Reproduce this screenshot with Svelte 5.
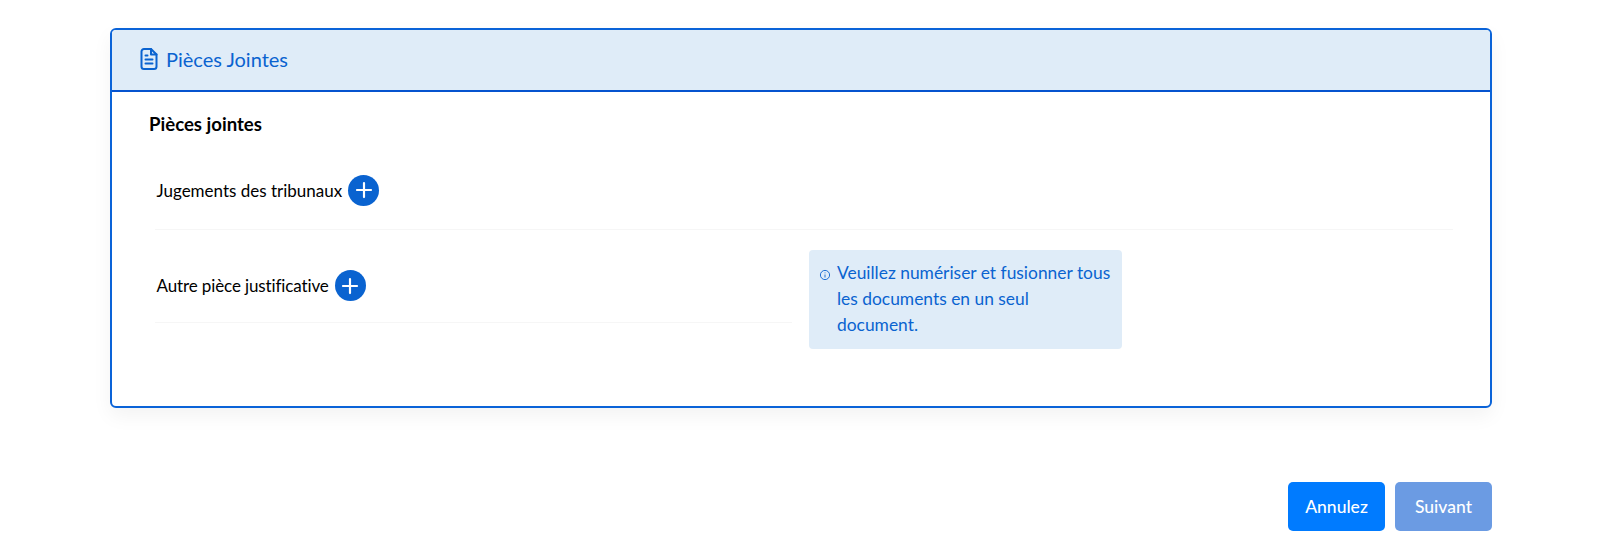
<script>
  const plus = "M12 5.500v13M5.500 12h13";
</script>

<main class="page">
  <section class="card">
    <header class="head">
      <svg class="doc" viewBox="0 0 24 24" width="24" height="24" fill="none" stroke="currentColor" stroke-width="2" stroke-linecap="round" stroke-linejoin="round">
        <path d="M14 2H7a2.500 2.500 0 0 0-2.500 2.500v15A2.500 2.500 0 0 0 7 22h10a2.500 2.500 0 0 0 2.500-2.500V7.500z" />
        <path d="M14 2v5.500h5.500M8.500 12.500h7M8.500 16.500h7M8.500 8.500h2" />
      </svg>
      <span>Pièces Jointes</span>
    </header>
    <div class="body">
      <h2>Pièces jointes</h2>
      <div class="row first">
        <span class="label">Jugements des tribunaux</span>
        <button class="add" aria-label="Ajouter">
          <svg viewBox="0 0 24 24" width="26" height="26" fill="none" stroke="#fff" stroke-width="2" stroke-linecap="round"><path d={plus} /></svg>
        </button>
      </div>
      <div class="second">
        <div class="row half">
          <span class="label tight">Autre pièce justificative</span>
          <button class="add" aria-label="Ajouter">
            <svg viewBox="0 0 24 24" width="26" height="26" fill="none" stroke="#fff" stroke-width="2" stroke-linecap="round"><path d={plus} /></svg>
          </button>
        </div>
        <aside class="note">
          <svg class="info" viewBox="0 0 12 12" width="12" height="12" fill="none" stroke="currentColor" stroke-width="0.9"><circle cx="6" cy="6" r="4.600" /><path d="M6 5.500v3M6 3.500v.8" /></svg>
          <p>Veuillez numériser et fusionner tous les documents en un seul document.</p>
        </aside>
      </div>
    </div>
  </section>
  <footer class="actions">
    <button class="btn primary">Annulez</button>
    <button class="btn muted">Suivant</button>
  </footer>
</main>

<style>
  :global(body) { margin: 0; background: #fff; }
  .page {
    width: 1382px;
    margin-left: 110px;
    padding-top: 28px;
    font-family: "Lato", "Open Sans", sans-serif;
    color: #000;
  }
  .card {
    height: 380px;
    box-sizing: border-box;
    border: 2px solid #0a63d8;
    border-radius: 6px;
    background: #fff;
    box-shadow: 0 8px 20px rgba(0, 0, 0, 0.05);
    overflow: hidden;
  }
  .head {
    height: 62px;
    box-sizing: border-box;
    display: flex;
    align-items: center;
    gap: 5px;
    padding: 0 0 2px 25px;
    background: #dfecf8;
    border-bottom: 2px solid #0553cf;
    color: #0a63d0;
    font-size: 20px;
  }
  .body { padding: 20px 37px 0 37px; }
  h2 { margin: 0; font-size: 18.600px; font-weight: 700; line-height: 24px; }
  .row {
    display: flex;
    align-items: center;
    gap: 6px;
    margin-left: 6px;
    padding-left: 1.500px;
    border-bottom: 1px solid #f6f6f6;
    font-size: 17px;
  }
  .tight { letter-spacing: -0.12px; }
  .first { height: 94px; box-sizing: border-box; padding-top: 15px; }
  .second { display: flex; gap: 17px; margin-top: 21px; align-items: flex-start; }
  .half { width: 637px; height: 72px; box-sizing: border-box; padding-bottom: 2px; flex: none; }
  .add {
    width: 31px;
    height: 31px;
    padding: 0;
    border: 0;
    border-radius: 50%;
    background: #0a63d0;
    display: flex;
    align-items: center;
    justify-content: center;
  }
  .note {
    width: 313px;
    height: 99px;
    box-sizing: border-box;
    display: flex;
    align-items: flex-start;
    gap: 6px;
    margin-top: -1px;
    padding: 10px 10px 0 10px;
    background: #dfecf8;
    border-radius: 4px;
    color: #0a63d0;
    font-size: 17.400px;
    line-height: 26px;
  }
  .info { flex: none; margin-top: 9px; }
  p { margin: 0; }
  .actions {
    display: flex;
    justify-content: flex-end;
    gap: 10px;
    margin-top: 74px;
  }
  .btn {
    width: 97px;
    height: 49px;
    border: 0;
    border-radius: 5px;
    color: #fff;
    font: 500 17.500px "Lato", "Open Sans", sans-serif;
  }
  .primary { background: #007bff; }
  .muted { background: #6b9be3; }
</style>
